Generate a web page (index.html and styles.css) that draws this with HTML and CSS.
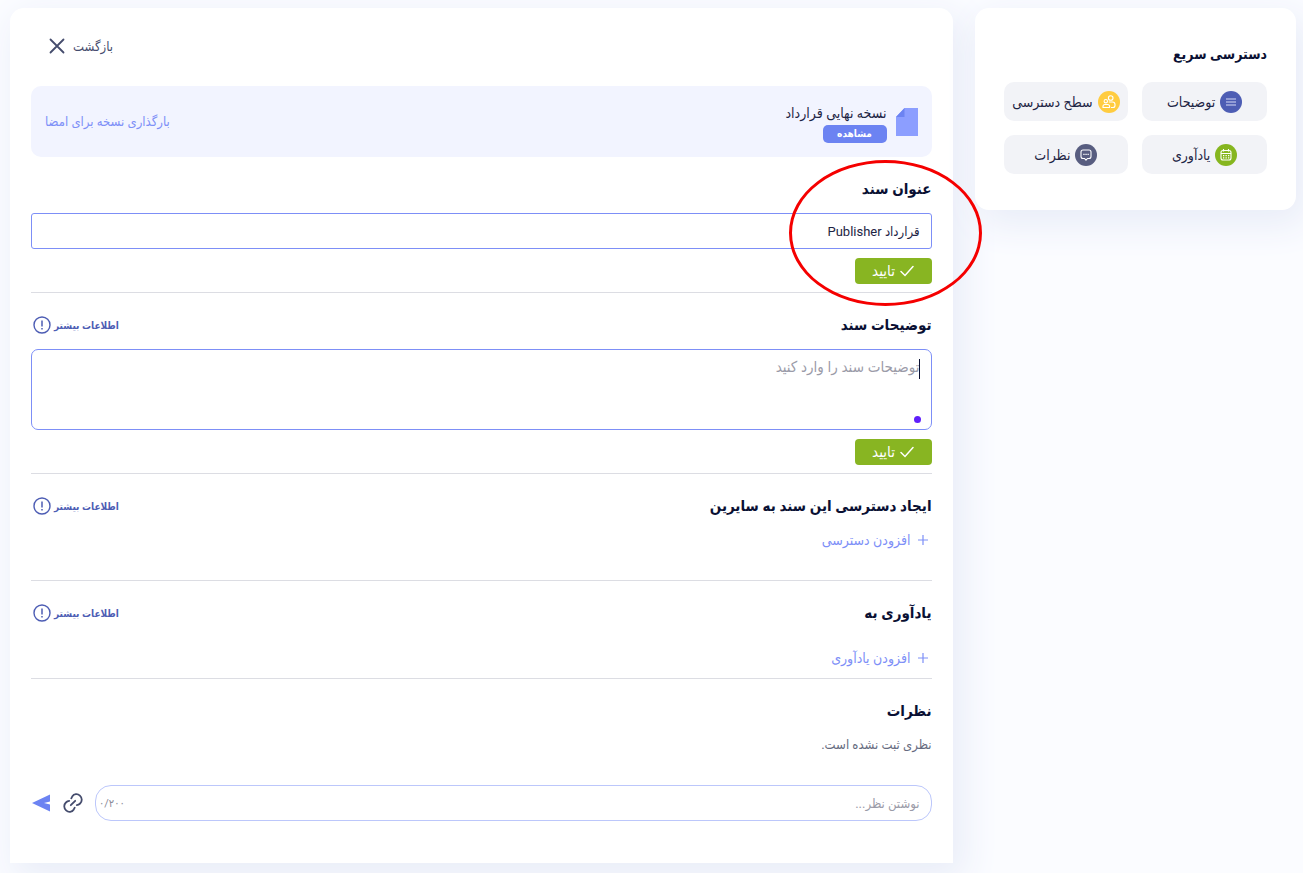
FILE: index.html
```html
<!DOCTYPE html>
<html lang="fa" dir="rtl">
<head>
    <meta charset="utf-8">
    <title>قرارداد Publisher</title>
    <link rel="stylesheet" href="styles.css">
</head>
<body>
    <div class="page">
        <aside class="card quick">
            <h2 class="title">دسترسی سریع</h2>
            <div class="quick-grid">
                <button type="button" class="quick-btn">
                    <svg class="badge" viewBox="0 0 22 22">
                        <circle cx="11" cy="11" r="11" fill="#4d5db4"/>
                        <path d="M6 8h10M6 11h10M6 14h10" stroke="#d5daf5" stroke-width="1.2"/>
                    </svg>
                    توضیحات
                </button>
                <button type="button" class="quick-btn">
                    <svg class="badge" viewBox="0 0 22 22">
                        <circle cx="11" cy="11" r="11" fill="#ffcc40"/>
                        <g fill="none" stroke="#fff" stroke-width="1.1">
                            <circle cx="12.7" cy="7" r="2.3"/>
                            <circle cx="7.800" cy="10.200" r="1.700"/>
                            <path d="M10.800 11h3.700q2.500 0 2.500 2.500v1q0 2-2 2h-2"/>
                            <path d="M5 16.500v-1q0-2 2-2h2.600q2 0 2 2v1z"/>
                        </g>
                    </svg>
                    سطح دسترسی
                </button>
                <button type="button" class="quick-btn">
                    <svg class="badge" viewBox="0 0 22 22">
                        <circle cx="11" cy="11" r="11" fill="#86b61f"/>
                        <g fill="none" stroke="#fff" stroke-width="1.1">
                            <rect x="6" y="6.500" width="10" height="9.500" rx="2"/>
                            <path d="M6 9.500h10M8.500 5v2.500M13.500 5v2.500"/>
                            <path d="M8 11.700h6.500M8 13.900h6.500" stroke-width="1.300" stroke-dasharray="1.300 1.200"/>
                        </g>
                    </svg>
                    یادآوری
                </button>
                <button type="button" class="quick-btn">
                    <svg class="badge" viewBox="0 0 22 22">
                        <circle cx="11" cy="11" r="11" fill="#585d80"/>
                        <g fill="none" stroke="#fff" stroke-width="1.1">
                            <path d="M8 6h6q2 0 2 2v4.500q0 2-2 2h-1.500L11 16.200 9.500 14.500H8q-2 0-2-2V8q0-2 2-2z"/>
                            <path d="M8.300 10.300h5.500" stroke-width="1.300" stroke-dasharray="1.300 .8"/>
                        </g>
                    </svg>
                    نظرات
                </button>
            </div>
        </aside>

        <main class="card document">
            <header class="top">
                <button type="button" class="back">
                    بازگشت
                    <svg class="back-icon" viewBox="0 0 16 16"><path d="M1.500 1.500l13 13M14.500 1.500l-13 13" stroke="#454c6d" stroke-width="1.800" stroke-linecap="round"/></svg>
                </button>
            </header>

            <div class="banner">
                <svg class="file-icon" viewBox="0 0 22 28"><path d="M8.500 0H22v28H0V9z" fill="#8c9eff"/><path d="M8.500 0v9H0z" fill="#6c83f2"/></svg>
                <div class="file">
                    <span class="file-name">نسخه نهایی قرارداد</span>
                    <a class="view" href="#">مشاهده</a>
                </div>
                <a class="upload" href="#">بارگذاری نسخه برای امضا</a>
            </div>

            <section class="section name-section">
                <label class="title" for="doc-title">عنوان سند</label>
                <input class="field" id="doc-title" type="text" value="قرارداد Publisher">
                <button type="button" class="confirm">
                    <svg class="check" viewBox="0 0 14 12"><path d="M1 6.500l4 4L13 1.500" fill="none" stroke="#fff" stroke-width="1.500" stroke-linecap="round"/></svg>
                    تایید
                </button>
                <div class="mark"></div>
            </section>

            <section class="section">
                <div class="section-head">
                    <label class="title" for="doc-desc">توضیحات سند</label>
                    <a class="info" href="#">اطلاعات بیشتر
                        <svg class="info-icon" viewBox="0 0 18 18"><circle cx="9" cy="9" r="8" fill="none" stroke="#4d5db4" stroke-width="1.400"/><path d="M9 4.500v6M9 12v1.500" stroke="#4d5db4" stroke-width="1.500"/></svg>
                    </a>
                </div>
                <div class="desc">
                    <textarea class="field area" id="doc-desc" placeholder="توضیحات سند را وارد کنید"></textarea>
                    <span class="caret"></span>
                    <span class="dot"></span>
                </div>
                <button type="button" class="confirm">
                    <svg class="check" viewBox="0 0 14 12"><path d="M1 6.500l4 4L13 1.500" fill="none" stroke="#fff" stroke-width="1.500" stroke-linecap="round"/></svg>
                    تایید
                </button>
            </section>

            <section class="section access">
                <div class="section-head">
                    <h2 class="title">ایجاد دسترسی این سند به سایرین</h2>
                    <a class="info" href="#">اطلاعات بیشتر
                        <svg class="info-icon" viewBox="0 0 18 18"><circle cx="9" cy="9" r="8" fill="none" stroke="#4d5db4" stroke-width="1.400"/><path d="M9 4.500v6M9 12v1.500" stroke="#4d5db4" stroke-width="1.500"/></svg>
                    </a>
                </div>
                <button type="button" class="add">
                    <svg class="plus" viewBox="0 0 12 12"><path d="M6 1v10M1 6h10" stroke="#7d8ff7" stroke-width="1.200"/></svg>
                    افزودن دسترسی
                </button>
            </section>

            <section class="section reminder">
                <div class="section-head">
                    <h2 class="title">یادآوری به</h2>
                    <a class="info" href="#">اطلاعات بیشتر
                        <svg class="info-icon" viewBox="0 0 18 18"><circle cx="9" cy="9" r="8" fill="none" stroke="#4d5db4" stroke-width="1.400"/><path d="M9 4.500v6M9 12v1.500" stroke="#4d5db4" stroke-width="1.500"/></svg>
                    </a>
                </div>
                <button type="button" class="add">
                    <svg class="plus" viewBox="0 0 12 12"><path d="M6 1v10M1 6h10" stroke="#7d8ff7" stroke-width="1.200"/></svg>
                    افزودن یادآوری
                </button>
            </section>

            <section class="section comments">
                <h2 class="title">نظرات</h2>
                <p class="empty">نظری ثبت نشده است.</p>
                <form class="write">
                    <div class="write-box">
                        <input class="write-input" type="text" aria-label="نوشتن نظر" placeholder="نوشتن نظر...">
                        <span class="count" dir="ltr">۰/۲۰۰</span>
                    </div>
                    <button type="button" class="icon-btn" aria-label="پیوست">
                        <svg class="link-icon" viewBox="0 0 20 20"><g fill="none" stroke="#454c6d" stroke-width="1.800" stroke-linecap="round"><path d="M8.300 5.300l.9-1.700C11 .8 14.500.4 16.900 2.600s2.400 5.800.2 7.900q-1.400 1.400-3.300 1.600"/><path d="M11.700 14.700l-.9 1.700C9 19.200 5.500 19.600 3.100 17.400s-2.400-5.800-.2-7.900q1.400-1.400 3.300-1.600"/><path d="M7.800 12.200l4.400-4.400"/></g></svg>
                    </button>
                    <button type="button" class="icon-btn" aria-label="ارسال">
                        <svg class="send-icon" viewBox="0 0 18 18"><path d="M0 9L18 .5v7L12 9l6 1.500v7z" fill="#6c83f2"/></svg>
                    </button>
                </form>
            </section>
        </main>
    </div>
</body>
</html>
```
FILE: styles.css
```css
* {
    box-sizing: border-box;
}
body {
    margin: 0;
    background-color: #fbfcff;
    color: #0a1033;
    font-family: Roboto, "DejaVu Sans Condensed", "DejaVu Sans", sans-serif;
    font-size: 14px;
}
button, input, textarea {
    font-family: inherit;
}
button {
    border: 0;
    padding: 0;
    background: none;
    cursor: pointer;
}
a {
    text-decoration: none;
}
svg {
    display: block;
    flex-shrink: 0;
}
.page {
    display: flex;
    align-items: flex-start;
    gap: 22px;
    padding: 8px 7px 10px 10px;
}
.card {
    background-color: #fff;
    border-radius: 14px;
    box-shadow: 8px 12px 36px 4px #e9edf8;
}
.title {
    display: block;
    margin: 0;
    color: #0a1033;
    font-size: 15px;
    font-weight: bold;
    line-height: 24px;
}

/* quick access */
.quick {
    position: relative;
    flex: 0 0 25%;
    padding: 34px 29px 36px;
}
.quick .title {
    font-size: 14px;
}
.quick-grid {
    display: grid;
    grid-template-columns: 1fr 1fr;
    gap: 14px;
    margin-top: 16px;
}
.quick-btn {
    display: flex;
    align-items: center;
    justify-content: center;
    gap: 5px;
    height: 39px;
    border-radius: 10px;
    background-color: #f2f3f7;
    color: #1d2444;
    font-size: 14px;
    white-space: nowrap;
}
.badge {
    width: 22px;
    height: 22px;
}

/* document */
.document {
    position: relative;
    flex: 1;
    padding: 24px 21px 0;
    border-radius: 14px 14px 0 0;
}
.quick {
    z-index: 1;
}
.top {
    display: flex;
    justify-content: flex-end;
    padding: 0 18px;
}
.back {
    display: flex;
    align-items: center;
    gap: 8px;
    height: 28px;
    color: #454c6d;
    font-size: 13px;
}
.back-icon {
    width: 16px;
    height: 16px;
}
.banner {
    display: flex;
    align-items: center;
    gap: 9px;
    height: 71px;
    margin-top: 26px;
    padding: 0 14px;
    border-radius: 10px;
    background-color: #f2f4ff;
}
.file-icon {
    width: 22px;
    height: 28px;
}
.file {
    display: flex;
    flex-direction: column;
    align-items: flex-start;
}
.file-name {
    color: #1d2444;
    font-size: 14px;
    line-height: 24px;
}
.view {
    width: 64px;
    border-radius: 5px;
    background-color: #6c83f2;
    color: #fff;
    font-size: 10px;
    font-weight: bold;
    line-height: 18px;
    text-align: center;
}
.upload {
    margin-right: auto;
    color: #7d8ff7;
    font-size: 13px;
}
.section {
    padding: 20px 0 8px;
    border-bottom: 1px solid #dcdde3;
}
.section-head {
    display: flex;
    align-items: center;
    justify-content: space-between;
}
.name-section {
    position: relative;
}
.field {
    display: block;
    width: 100%;
    height: 36px;
    margin-top: 12px;
    padding: 0 11px;
    border: 1px solid #7d8ff7;
    border-radius: 3px;
    background-color: #fff;
    color: #1d2444;
    font-size: 13px;
    outline: 0;
}
.desc {
    position: relative;
}
.area {
    height: 81px;
    padding: 7px 11px;
    border-radius: 7px;
    font-size: 15px;
    line-height: 20px;
    resize: none;
}
.area::placeholder, .write-input::placeholder {
    color: #9b9ba8;
    opacity: 1;
}
.caret {
    position: absolute;
    top: 10px;
    right: 12px;
    width: 1px;
    height: 20px;
    background-color: #0a1033;
}
.dot {
    position: absolute;
    right: 11px;
    bottom: 7px;
    width: 7px;
    height: 7px;
    border-radius: 50%;
    background-color: #5f1ffb;
}
.confirm {
    display: flex;
    align-items: center;
    justify-content: center;
    gap: 5px;
    width: 77px;
    height: 26px;
    margin-top: 9px;
    border-radius: 4px;
    background-color: #88b522;
    color: #fff;
    font-size: 15px;
}
.check {
    width: 14px;
    height: 12px;
}
/* red ring over the title field */
.mark {
    position: absolute;
    top: 3px;
    right: -50px;
    z-index: 2;
    width: 193px;
    height: 146px;
    border: 3px solid #f50000;
    border-radius: 50%;
    pointer-events: none;
}
.info {
    display: flex;
    align-items: center;
    gap: 3px;
    padding-left: 2px;
    color: #4d5db4;
    font-size: 10px;
    font-weight: bold;
}
.info-icon {
    width: 18px;
    height: 18px;
}
.add {
    display: flex;
    align-items: center;
    gap: 6px;
    height: 24px;
    margin-top: 10px;
    padding: 0 3px;
    color: #7d8ff7;
    font-size: 14px;
}
.plus {
    width: 12px;
    height: 12px;
}
.access {
    padding-bottom: 28px;
}
.reminder .add {
    margin-top: 21px;
}

/* comments */
.comments {
    padding-bottom: 42px;
    border-bottom: 0;
}
.empty {
    margin: 10px 0 0;
    color: #666b80;
    font-size: 13px;
    line-height: 24px;
}
.write {
    display: flex;
    align-items: center;
    gap: 12px;
    margin-top: 28px;
}
.write-box {
    display: flex;
    align-items: center;
    flex: 1;
    height: 36px;
    padding: 0 11px 0 3px;
    border: 1px solid #bcc7fb;
    border-radius: 16px;
}
.write-input {
    flex: 1;
    padding: 0;
    border: 0;
    background: none;
    color: #1d2444;
    font-size: 13px;
    outline: 0;
}
.count {
    color: #8a8a97;
    font-size: 11px;
}
.link-icon {
    width: 20px;
    height: 20px;
}
.send-icon {
    width: 20px;
    height: 18px;
}
```
